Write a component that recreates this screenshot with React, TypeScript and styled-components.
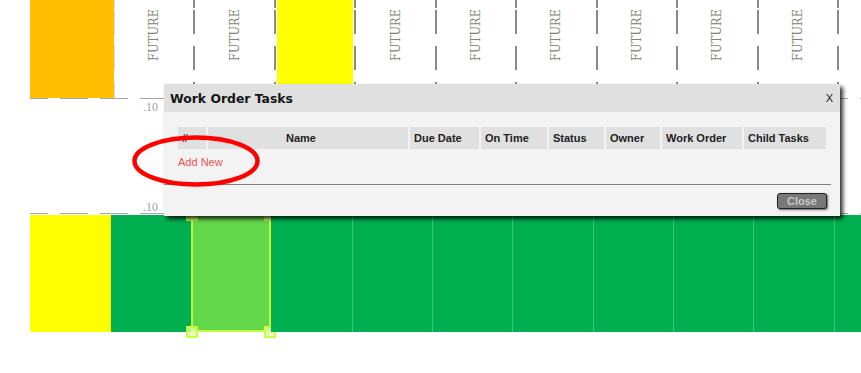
import React from "react";
import styled, { createGlobalStyle } from "styled-components";

type TopKind = "future" | "yellow" | "empty";

const topCells: TopKind[] = [
      "future",
      "future",
      "yellow",
      "future",
      "future",
      "future",
      "future",
      "future",
      "future",
      "empty",
];

const columns = [
      { label: "#", width: 28 },
      { label: "Name", width: 200, center: true },
      { label: "Due Date", width: 69 },
      { label: "On Time", width: 66 },
      { label: "Status", width: 55 },
      { label: "Owner", width: 54 },
      { label: "Work Order", width: 80 },
      { label: "Child Tasks", width: 82 },
];

const GlobalStyle = createGlobalStyle`
      html, body {
            margin: 0;
            padding: 0;
            background: #fff;
            overflow: hidden;
      }
`;

const Page = styled.div`
      position: relative;
      width: 861px;
      height: 373px;
      overflow: hidden;
      font-family: "Liberation Sans", Arial, sans-serif;
`;

const Board = styled.div`
      display: flex;
      flex-direction: column;
      padding-left: 30px;
`;

const TopRow = styled.div`
      display: flex;
      height: 98px;
`;

const OrangeCell = styled.div`
      flex: 0 0 84px;
      background: #ffbf00;
`;

const TopCell = styled.div<{ $kind: TopKind; $faint?: boolean }>`
      position: relative;
      flex: 0 0 80.44px;
      display: flex;
      justify-content: center;
      padding-top: 14px;
      box-sizing: border-box;
      background: ${({ $kind }) =>
            $kind === "yellow"
                  ? "linear-gradient(#ffff00, #ffff00) 2px 0 / calc(100% - 4px) 100% no-repeat"
                  : "transparent"};

      &::before {
            content: "";
            position: absolute;
            left: ${({ $faint }) => ($faint ? "0" : "-1px")};
            top: 0;
            bottom: 0;
            width: ${({ $faint }) => ($faint ? "1px" : "2px")};
            background: repeating-linear-gradient(
                  to bottom,
                  ${({ $faint }) => ($faint ? "#d8d8d8" : "#8a8a8a")} 0 24px,
                  transparent 24px 36px
            );
            background-position: 0 10px;
      }
`;

const Future = styled.span`
      writing-mode: vertical-rl;
      transform: rotate(180deg);
      font-family: "DejaVu Serif", "Liberation Serif", serif;
      font-stretch: condensed;
      font-size: 12.5px;
      line-height: 14px;
      height: 47px;
      color: #7a8a70;
      letter-spacing: 0.2px;
`;

const GapRow = styled.div`
      height: 117px;
      display: flex;
      flex-direction: column;
      justify-content: space-between;
      padding: 3px 0 2px 113px;
      box-sizing: border-box;
      background:
            repeating-linear-gradient(
                        to right,
                        #a8a8a8 0 18px,
                        transparent 18px 30px,
                        #a8a8a8 30px 40px
                  )
                  0 0 / 100% 1px no-repeat,
            repeating-linear-gradient(
                        to right,
                        #a8a8a8 0 18px,
                        transparent 18px 30px,
                        #a8a8a8 30px 40px
                  )
                  0 100% / 100% 1px no-repeat;
      background-position: 0 0, 0 calc(100% - 1px);
`;

const AxisLabel = styled.span`
      font-family: "Liberation Serif", serif;
      font-size: 12px;
      line-height: 12px;
      color: #a0a0a0;
`;

const BottomRow = styled.div`
      display: flex;
      height: 117px;
`;

const YellowBlock = styled.div`
      flex: 0 0 80.67px;
      background: #ffff00;
`;

const GreenCell = styled.div<{ $line?: boolean; $selected?: boolean }>`
      position: relative;
      flex: 0 0 80.33px;
      box-sizing: border-box;
      background: ${({ $selected }) => ($selected ? "#62d84a" : "#00af4f")};
      border-left: 1px solid
            ${({ $line }) => ($line ? "#3fc57a" : "transparent")};
      ${({ $selected }) =>
            $selected &&
            `
            border: 2px solid #c4ff3c;
            border-top: none;
      `}
`;

const Handle = styled.span<{ $x: "left" | "right"; $y: "top" | "bottom" }>`
      position: absolute;
      width: 12px;
      height: 12px;
      box-sizing: border-box;
      border: 2px solid #c8ff44;
      background: rgba(225, 255, 170, 0.8);
      ${({ $x }) => ($x === "left" ? "left: -7px;" : "right: -7px;")}
      ${({ $y }) => ($y === "top" ? "top: -6px;" : "bottom: -8px;")}
`;

const Modal = styled.div`
      position: absolute;
      left: 164px;
      top: 84px;
      width: 676px;
      height: 132px;
      display: flex;
      flex-direction: column;
      background: #f3f3f3;
      box-shadow: 3px 3px 4px rgba(0, 0, 0, 0.8);
      z-index: 10;
`;

const TitleBar = styled.div`
      height: 28px;
      display: flex;
      align-items: center;
      justify-content: space-between;
      padding: 0 7px 0 6px;
      background: #e0e0e0;
`;

const Title = styled.span`
      font-family: "DejaVu Sans", Verdana, sans-serif;
      font-weight: bold;
      font-size: 12.4px;
      color: #161616;
`;

const CloseX = styled.span`
      font-size: 11px;
      color: #222;
      cursor: pointer;
`;

const Body = styled.div`
      display: flex;
      flex-direction: column;
      padding: 15px 14px 7px 14px;
`;

const HeaderGrid = styled.div`
      display: grid;
      grid-template-columns: ${columns.map((c) => `${c.width}px`).join(" ")};
      column-gap: 2px;
      height: 22px;
`;

const HeaderCell = styled.div<{ $center?: boolean }>`
      display: flex;
      align-items: center;
      justify-content: ${({ $center }) => ($center ? "center" : "flex-start")};
      padding: ${({ $center }) => ($center ? "0 14px 0 0" : "0 0 0 4px")};
      background: #e0e0e0;
      font-size: 11px;
      font-weight: bold;
      color: #222;
      white-space: nowrap;
`;

const AddNew = styled.a`
      align-self: flex-start;
      margin-top: 7px;
      font-size: 11px;
      line-height: 13px;
      color: #f25050;
      text-decoration: none;
      cursor: pointer;
`;

const Rule = styled.div`
      height: 1px;
      margin: 15px -5px 0 -14px;
      background: #808080;
`;

const Footer = styled.div`
      display: flex;
      justify-content: flex-end;
      margin: 8px -1px 0 0;
`;

const CloseButton = styled.button`
      width: 50px;
      height: 16px;
      padding: 0;
      border: 1px solid #222;
      border-radius: 3px;
      background: #787878;
      box-shadow: 1px 1px 2px rgba(0, 0, 0, 0.6);
      font-family: "Liberation Sans", Arial, sans-serif;
      font-size: 11px;
      font-weight: bold;
      line-height: 14px;
      color: #c8c8c8;
      cursor: pointer;
`;

const Annotation = styled.svg`
      position: absolute;
      left: 130px;
      top: 133px;
      z-index: 20;
      pointer-events: none;
`;

const App: React.FC = () => {
      return (
            <Page>
                  <GlobalStyle />
                  <Board>
                        <TopRow>
                              <OrangeCell />
                              {topCells.map((kind, index) => (
                                    <TopCell key={index} $kind={kind} $faint={index === 0}>
                                          {kind === "future" && (
                                                <Future>FUTURE</Future>
                                          )}
                                    </TopCell>
                              ))}
                        </TopRow>
                        <GapRow>
                              <AxisLabel>.10</AxisLabel>
                              <AxisLabel>.10</AxisLabel>
                        </GapRow>
                        <BottomRow>
                              <YellowBlock />
                              {Array.from({ length: 10 }).map((_, index) => (
                                    <GreenCell
                                          key={index}
                                          $selected={index === 1}
                                          $line={index > 2}
                                    >
                                          {index === 1 && (
                                                <>
                                                      <Handle $x="left" $y="top" />
                                                      <Handle $x="right" $y="top" />
                                                      <Handle $x="left" $y="bottom" />
                                                      <Handle $x="right" $y="bottom" />
                                                </>
                                          )}
                                    </GreenCell>
                              ))}
                        </BottomRow>
                  </Board>

                  <Modal>
                        <TitleBar>
                              <Title>Work Order Tasks</Title>
                              <CloseX>X</CloseX>
                        </TitleBar>
                        <Body>
                              <HeaderGrid>
                                    {columns.map((col) => (
                                          <HeaderCell key={col.label} $center={col.center}>
                                                {col.label}
                                          </HeaderCell>
                                    ))}
                              </HeaderGrid>
                              <AddNew>Add New</AddNew>
                              <Rule />
                              <Footer>
                                    <CloseButton>Close</CloseButton>
                              </Footer>
                        </Body>
                  </Modal>

                  {/* annotation drawn over the dialog */}
                  <Annotation width="132" height="56" viewBox="0 0 132 56">
                        <ellipse
                              cx="66"
                              cy="28"
                              rx="61.5"
                              ry="23.5"
                              fill="none"
                              stroke="#ff0000"
                              strokeWidth="4.5"
                        />
                  </Annotation>
            </Page>
      );
};

export default App;
